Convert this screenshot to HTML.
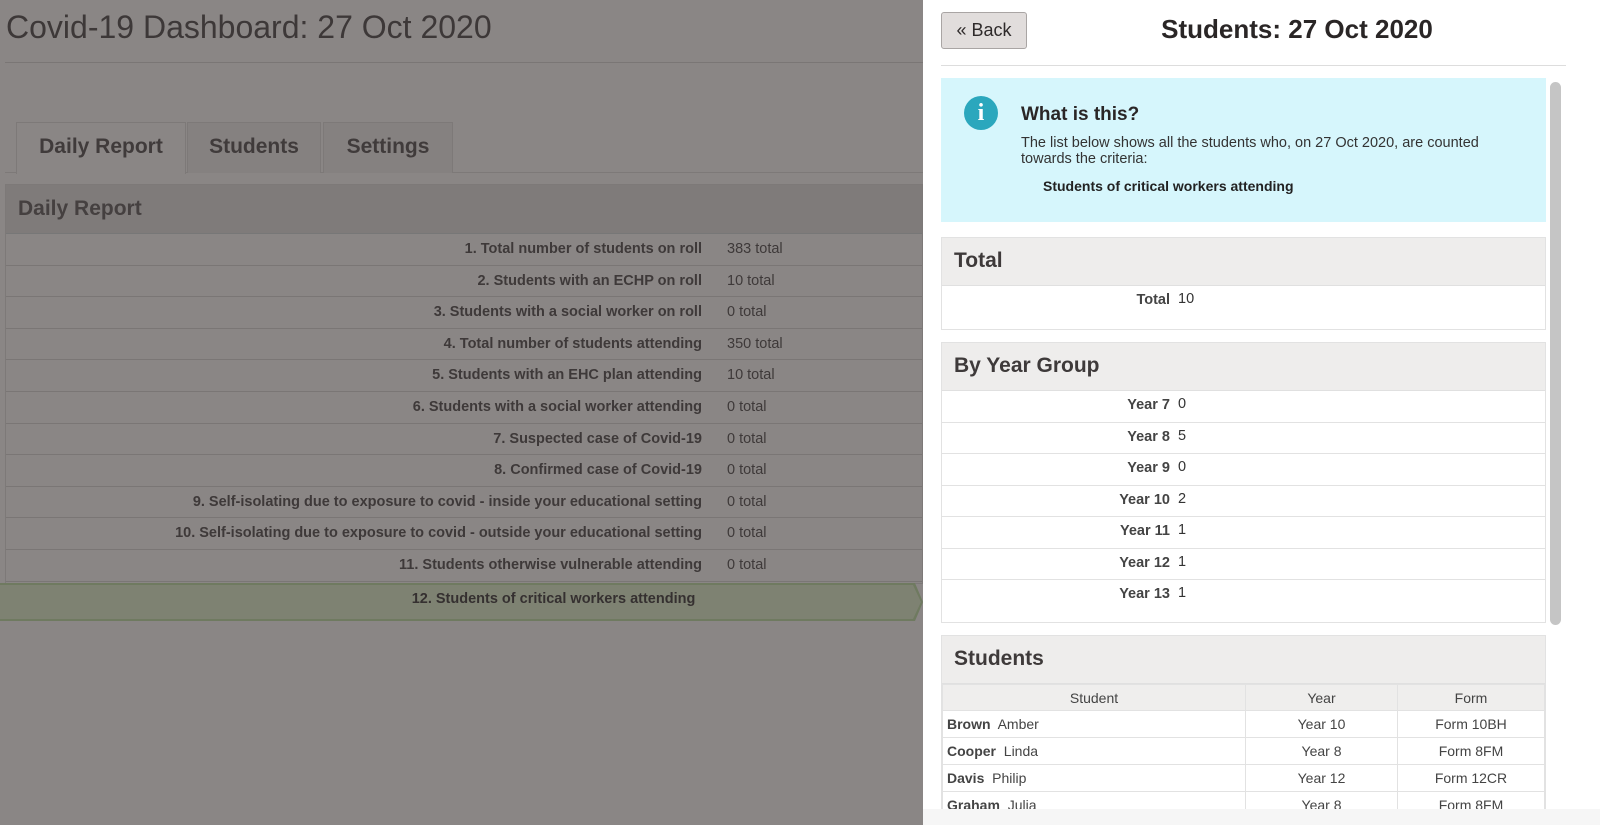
<!DOCTYPE html>
<html><head><style>
*{box-sizing:border-box;margin:0;padding:0}
body{width:1600px;height:825px;overflow:hidden;background:#8a8685;font-family:"Liberation Sans",sans-serif;position:relative;color:#3a3535}
.title{position:absolute;left:6px;top:9px;font-size:32px;color:#3d3838}
.hr1{position:absolute;left:5px;top:62px;width:918px;height:1px;background:#7a7675}
.tabs{position:absolute;left:16px;top:122px;height:51px}
.tab{position:absolute;top:0;height:51px;border:1px solid #7d7978;border-bottom:none;font-size:21px;font-weight:bold;text-align:center;line-height:48px;color:#403b3b;background:#858180}
.tabline{position:absolute;left:5px;top:172px;width:918px;height:1px;background:#7d7978}
.box{position:absolute;left:5px;top:184px;width:918px;height:400px;border:1px solid #7d7978}
.bh{height:49px;background:#7f7b7a;font-size:21px;font-weight:bold;padding:12px 12px;color:#454040;border-bottom:1px solid #777}
.row{height:31.6px;border-bottom:1px solid #7a7675;font-size:14.5px;font-weight:bold;position:relative;color:#3e3939}
.row .l{position:absolute;right:220px;top:7px}
.row .v{position:absolute;left:721px;top:7px;font-weight:normal}
.green{position:absolute;left:0;top:583px;width:923px;height:38px;background:#6f7a60;clip-path:polygon(0 0,915px 0,923px 50%,915px 100%,0 100%)}
.green div{position:absolute;left:0;top:2px;width:921px;height:34px;background:#7e8272;clip-path:polygon(0 0,913px 0,921px 50%,913px 100%,0 100%);font-size:14.5px;font-weight:bold;text-align:center;line-height:28px;padding-left:186px;color:#353030}
.panel{position:absolute;left:923px;top:0;width:677px;height:825px;background:#fff;overflow:hidden}
.back{position:absolute;left:18px;top:12px;width:86px;height:37px;background:#e1dddc;border:1px solid #a9a5a4;border-radius:3px;font-size:18px;text-align:center;line-height:35px;color:#2e2a2a}
.ptitle{position:absolute;left:200px;width:348px;top:14px;text-align:center;font-size:26px;font-weight:bold;color:#2a2626}
.hr2{position:absolute;left:18px;top:65px;width:625px;height:1px;background:#ddd}
.info{position:absolute;left:18px;top:78px;width:605px;height:144px;background:#d6f6fc}
.icon{position:absolute;left:23px;top:18px;width:34px;height:34px;border-radius:50%;background:#2ba7bd;color:#fff;font-weight:bold;font-size:24px;text-align:center;line-height:34px;font-family:"Liberation Serif",serif}
.sb{position:absolute;left:627px;top:82px;width:11px;height:543px;background:#c5c5c5;border-radius:6px}
.sec{position:absolute;left:18px;width:605px;border:1px solid #e2e2e2;overflow:hidden}
.sh{height:48px;background:#eeedec;font-size:21px;font-weight:bold;padding:11px 12px;color:#3e3a3a;border-bottom:1px solid #e0e0e0}
.yr{height:31.5px;border-bottom:1px solid #e2e2e2;position:relative;font-size:14.5px}
.yr .l{position:absolute;right:375px;top:6px;font-weight:bold;color:#444}
.yr .v{position:absolute;left:236px;top:5px;color:#333}
table{border-collapse:collapse;width:100%;font-size:14px}
td,th{border:1px solid #e2e2e2;height:27px;font-weight:normal;color:#444}
th{background:#efeeed;height:26px}
td{text-align:center}
td.n{text-align:left;padding-left:4px}
.strip{position:absolute;left:923px;top:809px;width:677px;height:16px;background:#f6f6f6;z-index:5}
</style></head><body>
<div class="title">Covid-19 Dashboard: 27 Oct 2020</div>
<div class="hr1"></div>
<div class="tabline"></div>
<div class="tabs">
<div class="tab" style="left:0;width:170px;height:52px;background:#8a8685">Daily Report</div>
<div class="tab" style="left:171px;width:134px">Students</div>
<div class="tab" style="left:307px;width:130px">Settings</div>
</div>
<div class="box">
<div class="bh">Daily Report</div>
<div class="row"><span class="l">1. Total number of students on roll</span><span class="v">383 total</span></div>
<div class="row"><span class="l">2. Students with an ECHP on roll</span><span class="v">10 total</span></div>
<div class="row"><span class="l">3. Students with a social worker on roll</span><span class="v">0 total</span></div>
<div class="row"><span class="l">4. Total number of students attending</span><span class="v">350 total</span></div>
<div class="row"><span class="l">5. Students with an EHC plan attending</span><span class="v">10 total</span></div>
<div class="row"><span class="l">6. Students with a social worker attending</span><span class="v">0 total</span></div>
<div class="row"><span class="l">7. Suspected case of Covid-19</span><span class="v">0 total</span></div>
<div class="row"><span class="l">8. Confirmed case of Covid-19</span><span class="v">0 total</span></div>
<div class="row"><span class="l">9. Self-isolating due to exposure to covid - inside your educational setting</span><span class="v">0 total</span></div>
<div class="row"><span class="l">10. Self-isolating due to exposure to covid - outside your educational setting</span><span class="v">0 total</span></div>
<div class="row"><span class="l">11. Students otherwise vulnerable attending</span><span class="v">0 total</span></div>
</div>
<div class="green"><div>12. Students of critical workers attending</div></div>

<div class="panel">
<div class="back">« Back</div>
<div class="ptitle">Students: 27 Oct 2020</div>
<div class="hr2"></div>
<div class="info">
<div class="icon">i</div>
<div style="position:absolute;left:80px;top:26px;font-size:19px;font-weight:bold;color:#2a2626">What is this?</div>
<div style="position:absolute;left:80px;top:57px;width:510px;font-size:14.5px;line-height:16px;color:#333">The list below shows all the students who, on 27 Oct 2020, are counted towards the criteria:</div>
<div style="position:absolute;left:102px;top:100px;font-size:14px;font-weight:bold;color:#222">Students of critical workers attending</div>
</div>
<div class="sb"></div>
<div class="sec" style="top:237px;height:93px"><div class="sh">Total</div>
<div class="yr" style="border:none"><span class="l">Total</span><span class="v">10</span></div></div>
<div class="sec" style="top:342px;height:281px"><div class="sh">By Year Group</div>
<div class="yr"><span class="l">Year 7</span><span class="v">0</span></div>
<div class="yr"><span class="l">Year 8</span><span class="v">5</span></div>
<div class="yr"><span class="l">Year 9</span><span class="v">0</span></div>
<div class="yr"><span class="l">Year 10</span><span class="v">2</span></div>
<div class="yr"><span class="l">Year 11</span><span class="v">1</span></div>
<div class="yr"><span class="l">Year 12</span><span class="v">1</span></div>
<div class="yr" style="border:none"><span class="l">Year 13</span><span class="v">1</span></div>
</div>
<div class="sec" style="top:635px;height:200px"><div class="sh">Students</div>
<table><tr><th style="width:303px">Student</th><th style="width:152px">Year</th><th>Form</th></tr>
<tr><td class="n"><b>Brown</b>&nbsp; Amber</td><td>Year 10</td><td>Form 10BH</td></tr>
<tr><td class="n"><b>Cooper</b>&nbsp; Linda</td><td>Year 8</td><td>Form 8FM</td></tr>
<tr><td class="n"><b>Davis</b>&nbsp; Philip</td><td>Year 12</td><td>Form 12CR</td></tr>
<tr><td class="n"><b>Graham</b>&nbsp; Julia</td><td>Year 8</td><td>Form 8FM</td></tr>
</table></div>
</div>
<div class="strip"></div>
</body></html>
